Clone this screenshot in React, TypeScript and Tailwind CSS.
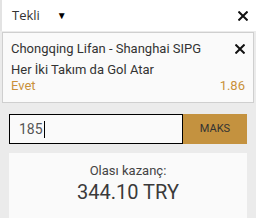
export default function App() {
	return (
		<div className="w-[256px] h-[218px] overflow-hidden bg-[#ebebeb] font-['Roboto',sans-serif] text-[#333]">
			<div className="flex h-[31px] items-center justify-between bg-white pl-[10px] pr-[8px] border-l-2 border-[#e3e3e3]">
				<div className="flex items-center">
					<span className="font-['Open_Sans',sans-serif] text-[13px] text-[#333]">Tekli</span>
					<span className="ml-[17px] text-[10px] text-black">▼</span>
				</div>
				<XIcon />
			</div>
			<div className="mx-[2px] mt-[1px] h-[71px] border border-[#cfcfcf] bg-[#fafafa] px-[8px] pt-[7px]">
				<div className="flex items-center justify-between">
					<span className="text-[13px] leading-[18px]">Chongqing Lifan - Shanghai SIPG</span>
					<XIcon />
				</div>
				<div className="mt-[4px] text-[13px] leading-[16px]">Her İki Takım da Gol Atar</div>
				<div className="flex justify-between text-[13px] leading-[16px] text-[#c9913a]">
					<span>Evet</span>
					<span>1.86</span>
				</div>
			</div>
			<div className="mx-[9px] mt-[11px] flex h-[30px]">
				<div className="flex flex-1 items-center border border-black bg-[#fafafa] pl-[9px]">
					<span className="text-[14px] text-[#555]">185</span>
					<span className="ml-[1px] h-[17px] w-px bg-black" />
				</div>
				<div className="flex w-[64px] items-center justify-center bg-[#c4923f] text-[11px] text-[#333]">MAKS</div>
			</div>
			<div className="mx-[9px] mt-[9px] flex h-[70px] flex-col items-center bg-[#fafafa] pt-[10px]">
				<span className="text-[13px] leading-[16px] text-[#444]">Olası kazanç:</span>
				<span className="mt-[1px] text-[20px] leading-[24px] text-[#3a3a3a]">344.10 TRY</span>
			</div>
		</div>
	)
}

function XIcon() {
	return (
		<svg width="10" height="10" viewBox="0 0 10 10" className="shrink-0">
			<path d="M1.2 1.2 L8.8 8.8 M8.8 1.2 L1.2 8.8" stroke="#111" strokeWidth="2" strokeLinecap="square" />
		</svg>
	)
}
